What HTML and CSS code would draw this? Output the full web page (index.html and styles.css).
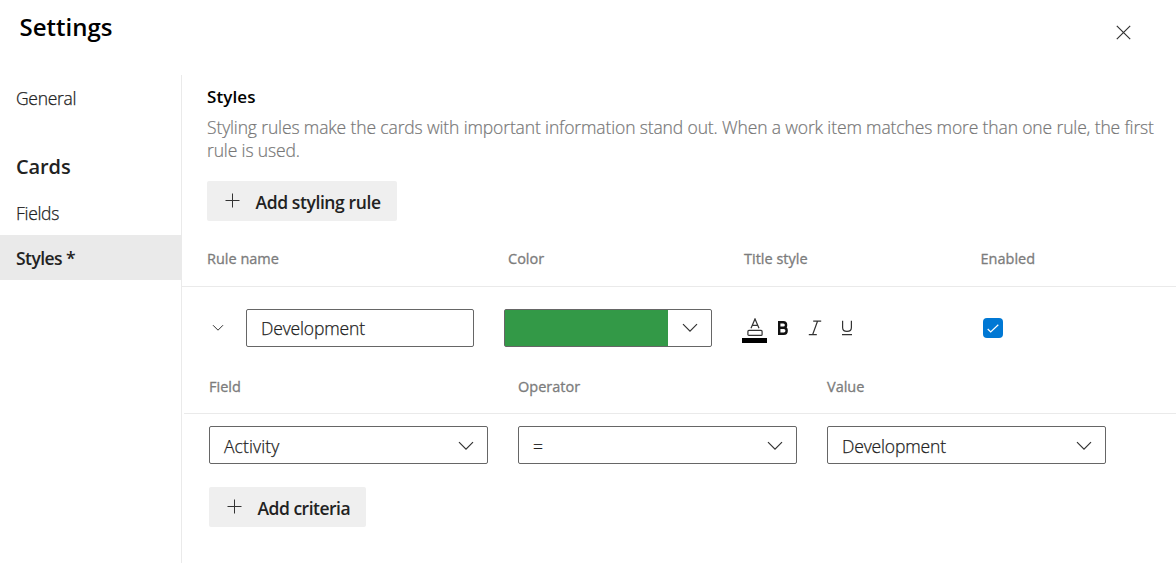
FILE: index.html
```html
<!DOCTYPE html>
<html lang="en">
<head>
<meta charset="utf-8">
<title>Settings</title>
<link rel="stylesheet" href="styles.css">
</head>
<body>
<div class="panel">
  <header class="header">
    <h1 class="title"><span>Settings</span></h1>
    <button class="close" aria-label="Close"><svg width="15" height="15" viewBox="0 0 15 15"><path d="M.8 .8l13.4 13.4M14.2 .8L.8 14.2"/></svg></button>
  </header>
  <div class="body">
    <nav class="nav">
      <a class="nav-item general"><span>General</span></a>
      <h2 class="nav-heading"><span>Cards</span></h2>
      <a class="nav-item"><span>Fields</span></a>
      <a class="nav-item selected"><span>Styles *</span></a>
    </nav>
    <main class="main">
      <section class="intro">
        <h3 class="section-title"><span>Styles</span></h3>
        <p class="desc"><span>Styling rules make the cards with important information stand out. When a work item matches more than one rule, the first</span><br><span>rule is used.</span></p>
        <button class="btn btn-rule"><svg width="15" height="15" viewBox="0 0 15 15"><path d="M7.5 .5v14M.5 7.5h14"/></svg><span>Add styling rule</span></button>
      </section>
      <div class="rule-head label-row"><span>Rule name</span><span>Color</span><span>Title style</span><span>Enabled</span></div>
      <div class="rule-row">
        <svg class="collapse" width="12" height="8" viewBox="0 0 12 8"><path d="M1 1.2l5 5 5-5"/></svg>
        <div class="field name"><span>Development</span></div>
        <div class="field color"><div class="swatch"></div><div class="drop"><svg width="16" height="10" viewBox="0 0 16 10"><path d="M1 1.2l7 7 7-7"/></svg></div></div>
        <div class="formats">
          <div class="font-color">
            <svg width="16" height="18" viewBox="0 0 16 18"><path d="M4 10.3L8 .9l4 9.4M5.4 7.4h5.2"/><rect x=".9" y="12.4" width="14.2" height="5" rx="1"/></svg>
            <div class="font-bar"></div>
          </div>
          <svg class="bold" width="12" height="16" viewBox="0 0 12 16"><path d="M2.2 2.2h4.1c3.7 0 3.7 5.5 0 5.5H2.2zM2.2 7.7h4.6c3.8 0 3.8 6 0 6H2.2z"/></svg>
          <svg class="italic" width="14" height="16" viewBox="0 0 14 16"><path d="M5.2 1.2h8M.8 14.7h8M9.5 1.2L4.6 14.7"/></svg>
          <svg class="underline" width="12" height="16" viewBox="0 0 12 16"><path d="M1.6.7v6.7c0 5.2 8.8 5.2 8.8 0V.7M1 14.7h10"/></svg>
        </div>
        <div class="check"><svg width="12" height="9" viewBox="0 0 12 9"><path d="M.7 5l3 3L11.3.8"/></svg></div>
      </div>
      <div class="criteria-head label-row"><span>Field</span><span>Operator</span><span>Value</span></div>
      <div class="criteria-row">
        <div class="field select"><span class="activity">Activity</span><svg width="16" height="10" viewBox="0 0 16 10"><path d="M1 1.2l7 7 7-7"/></svg></div>
        <div class="field select"><span>=</span><svg width="16" height="10" viewBox="0 0 16 10"><path d="M1 1.2l7 7 7-7"/></svg></div>
        <div class="field select"><span>Development</span><svg width="16" height="10" viewBox="0 0 16 10"><path d="M1 1.2l7 7 7-7"/></svg></div>
      </div>
      <button class="btn btn-criteria"><svg width="15" height="15" viewBox="0 0 15 15"><path d="M7.5 .5v14M.5 7.5h14"/></svg><span>Add criteria</span></button>
    </main>
  </div>
</div>
</body>
</html>
```
FILE: styles.css
```css
* { box-sizing: border-box; }
body { margin: 0; background: #fff; color: #222; font-family: "Open Sans", "Noto Sans", sans-serif; font-size: 17.5px; }
h1, h2, h3, p { margin: 0; }
svg { display: block; flex: none; fill: none; stroke: #333; stroke-width: 1.2; }
span { white-space: nowrap; }
button { font: inherit; border: 0; padding: 0; background: none; color: inherit; }

.panel { width: 1176px; height: 563px; overflow: hidden; display: flex; flex-direction: column; }
.header { height: 75px; flex: none; display: flex; justify-content: space-between; align-items: flex-start; padding: 10px 45px 0 19.5px; }
.title { font-size: 24px; line-height: 34px; font-weight: 600; color: #000; }
.close { margin-top: 14.5px; }

.body { flex: 1; display: flex; min-height: 0; }
.nav { width: 182px; flex: none; border-right: 1px solid #eaeaea; padding-top: 1px; }
.nav-item { display: flex; align-items: center; height: 45px; padding: 1px 0 0 16px; font-weight: 300; letter-spacing: -0.3px; color: #222; -webkit-text-stroke: 0.25px; }
.general { padding-top: 0; height: 44px; margin-bottom: 1px; }
.nav-item.selected { background: #eaeaea; font-weight: 600; letter-spacing: -0.55px; -webkit-text-stroke: 0; }
.nav-heading { display: flex; align-items: center; height: 69px; padding: 22px 0 0 16px; font-size: 20px; font-weight: 600; letter-spacing: -0.1px; }

.main { flex: 1; min-width: 0; }
.intro { padding: 10px 0 0 25px; }
.section-title { font-size: 17px; line-height: 23px; font-weight: 600; color: #000; letter-spacing: 0.1px; }
.desc { margin-top: 8px; line-height: 23px; font-weight: 300; letter-spacing: -0.135px; color: #777; -webkit-text-stroke: 0.2px; }
.btn { display: flex; align-items: center; gap: 15.5px; height: 40px; padding-left: 18px; background: #efefef; border-radius: 2px; font-weight: 600; letter-spacing: -0.4px; }
.btn svg { margin-top: -2px; stroke-width: 1; }
.btn span { padding-top: 2px; }
.btn-rule { width: 190px; margin-top: 19px; }
.btn-criteria { width: 157px; margin: 23px 0 0 27px; letter-spacing: -0.5px; }
.btn-criteria span { padding-top: 1px; }

.label-row { display: grid; font-size: 14.5px; line-height: 20px; font-weight: 400; letter-spacing: 0; color: #7c7c7c; -webkit-text-stroke: 0.3px; }
.rule-head { grid-template-columns: 301px 236px 236.5px auto; height: 66px; padding: 28px 0 0 25px; border-bottom: 1px solid #eaeaea; }
.rule-row { display: flex; height: 82px; padding: 22px 0 0 30px; align-items: flex-start; }
.collapse { margin: 15px 22.5px 0 -.5px; stroke-width: 1; }
.field { height: 38px; border: 1px solid #666; border-radius: 2px; display: flex; align-items: center; font-weight: 300; letter-spacing: -0.15px; color: #222; -webkit-text-stroke: 0.25px; }
.name { width: 228px; padding-left: 14px; }
.color { width: 208px; margin-left: 30px; }
.swatch { width: 163px; height: 36px; background: #339947; }
.drop { flex: 1; display: flex; justify-content: center; }
.formats { display: flex; margin-left: 30px; height: 38px; }
.font-color { width: 25px; padding-top: 9px; display: flex; flex-direction: column; align-items: center; }
.font-color svg { height: 18px; }
.font-bar { width: 25px; height: 5px; margin-top: 2px; background: #000; }
.bold { margin: 11px 0 0 10px; stroke: #111; stroke-width: 2.4; }
.italic { margin: 11px 0 0 19px; }
.underline { margin: 11px 0 0 19px; }
.check { width: 20px; height: 20px; margin: 9px 0 0 130px; border-radius: 4px; background: #0078d4; display: flex; align-items: center; justify-content: center; }
.check svg { stroke: #fff; }
.criteria-head { grid-template-columns: 309px 309px auto; height: 45px; margin-left: 2px; padding: 8px 0 0 25px; border-bottom: 1px solid #eaeaea; }
.criteria-row { display: flex; gap: 30px; padding: 12px 0 0 27px; }
.select { width: 279px; padding: 0 13px 0 14px; justify-content: space-between; }
.select span { padding-top: 2px; }
.select svg { margin-top: 1px; }
.select .activity { letter-spacing: 0.1px; }
```
